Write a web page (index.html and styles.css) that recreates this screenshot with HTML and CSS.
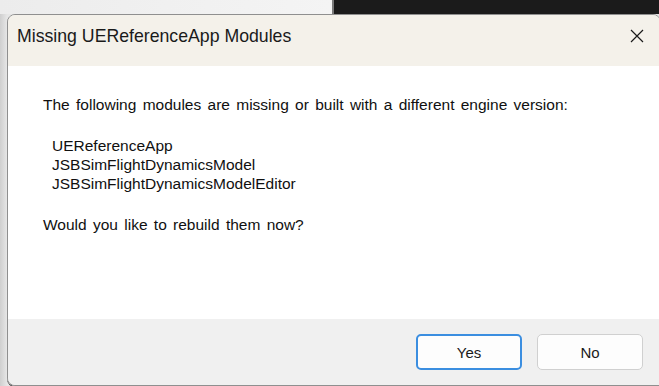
FILE: index.html
```html
<!DOCTYPE html>
<html lang="en">
<head>
  <meta charset="UTF-8">
  <title>Missing UEReferenceApp Modules</title>
  <link rel="stylesheet" href="styles.css">
</head>
<body>

  <div class="dialog">
    <div class="title-bar">
      <span class="title">Missing UEReferenceApp Modules</span>
      <span class="close">
        <svg width="14" height="14" viewBox="0 0 14 14">
          <path d="M1 1 L13 13 M13 1 L1 13" stroke="#1a1a1a" stroke-width="1.2" fill="none"/>
        </svg>
      </span>
    </div>

    <div class="content">
      <p class="intro">The following modules are missing or built with a different engine version:</p>
      <ul class="modules">
        <li>UEReferenceApp</li>
        <li>JSBSimFlightDynamicsModel</li>
        <li>JSBSimFlightDynamicsModelEditor</li>
      </ul>
      <p class="question">Would you like to rebuild them now?</p>
    </div>

    <div class="footer">
      <button class="btn btn-default">Yes</button>
      <button class="btn">No</button>
    </div>
  </div>

</body>
</html>
```

FILE: styles.css
```css
html, body {
  margin: 0;
  height: 100%;
  overflow: hidden;
}

body {
  font-family: 'Liberation Sans', Arial, sans-serif;
  background:
    linear-gradient(to right, #ececec 0, #f4f4f4 332px, #7a7a7a 332px, #7a7a7a 334px, #1b1b1b 334px) top / 100% 14px no-repeat,
    linear-gradient(to right, #cfcfcf, #e6e6e6 7px);
  padding-top: 14px;
  box-sizing: border-box;
}

.dialog {
  width: 652px;
  height: 370px;
  margin-left: 7px;
  border: 1px solid #8f8f8f;
  border-radius: 8px 8px 0 8px;
  overflow: hidden;
  display: flex;
  flex-direction: column;
  box-shadow: 0 1px 0 #3a3a3a;
}

.title-bar {
  height: 51px;
  background: #f4f1ea;
  display: flex;
  justify-content: space-between;
  align-items: flex-start;
  padding: 9px 16px 0 9px;
  box-sizing: border-box;
}

.title {
  font-size: 17.7px;
  line-height: 24px;
  color: #1a1a1a;
}

.close {
  display: flex;
  margin-top: 5px;
}

.content {
  flex: 1;
  background: #ffffff;
  padding: 29px 0 0 35px;
  font-size: 15.5px;
  line-height: 19px;
  word-spacing: 2px;
  color: #101010;
}

.intro {
  margin: 0 0 22px;
}

.modules {
  list-style: none;
  margin: 0 0 22px;
  padding-left: 9px;
}

.question {
  margin: 0;
}

.footer {
  height: 66px;
  background: #f0f0f0;
  display: flex;
  justify-content: flex-end;
  align-items: flex-start;
  gap: 15px;
  padding: 15px 17px 0 0;
  box-sizing: border-box;
}

.btn {
  width: 106px;
  height: 36px;
  background: #fdfdfd;
  border: 1px solid #d0d0d0;
  border-radius: 5px;
  font-family: 'Liberation Sans', Arial, sans-serif;
  font-size: 15px;
  color: #1a1a1a;
  cursor: pointer;
}

.btn-default {
  border: 2px solid #3b8ee0;
}
```
